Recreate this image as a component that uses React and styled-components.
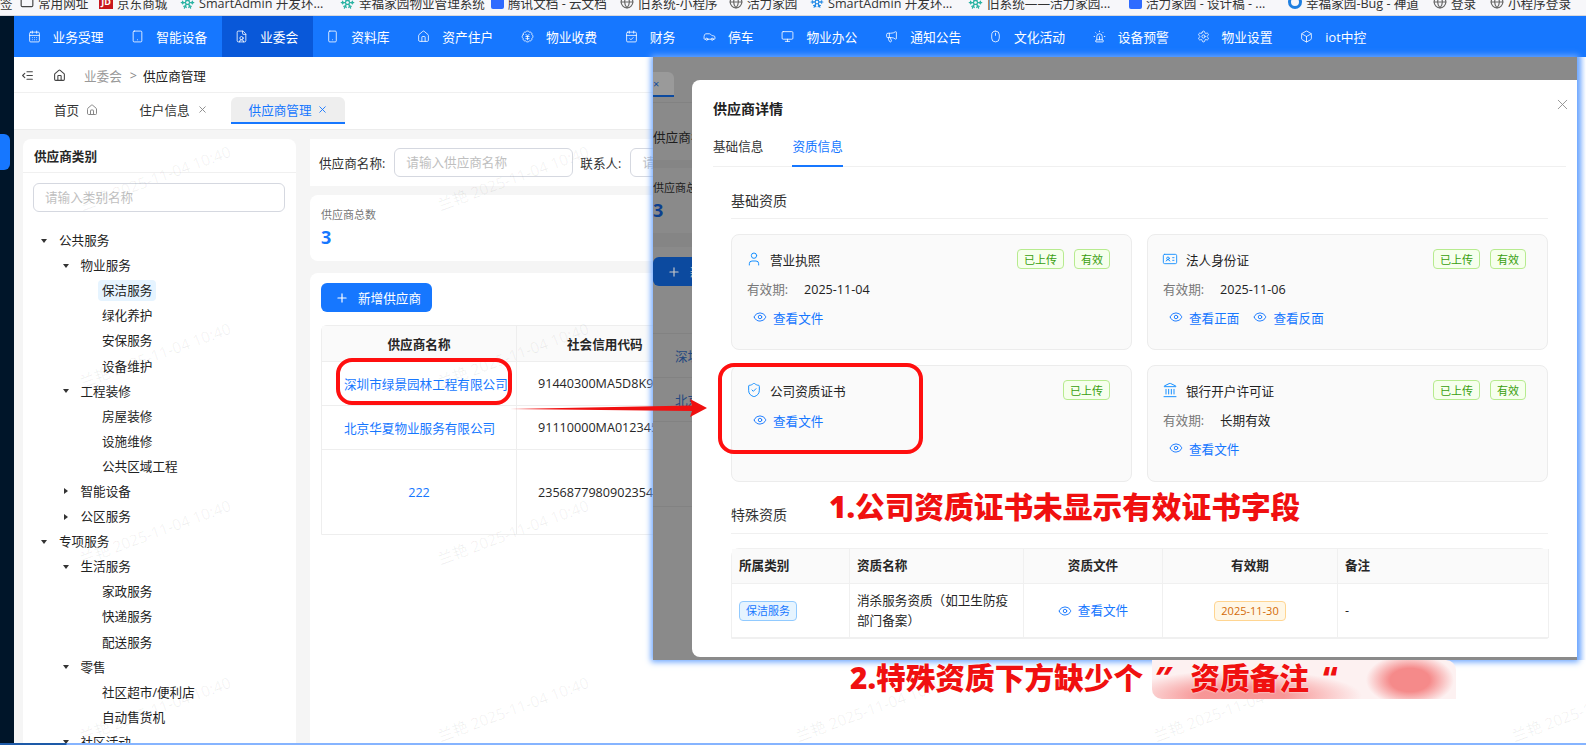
import React from "react";
import styled, { createGlobalStyle } from "styled-components";
import {
  BadgeJapaneseYen,
  Box,
  CalendarCheck,
  CalendarDays,
  Car,
  Eye,
  FileUser,
  Folder,
  Globe,
  House,
  IdCard,
  IndentDecrease,
  Landmark,
  Megaphone,
  Monitor,
  Mouse,
  Plus,
  Settings,
  ShieldCheck,
  Siren,
  Smartphone,
  Snowflake,
  Tablet,
  User,
  X,
} from "lucide-react";

const GlobalStyle = createGlobalStyle`
  html, body {
    margin: 0;
    padding: 0;
    background: #fff;
  }

  * {
    box-sizing: border-box;
  }

  body {
    font-family: "Open Sans", "Noto Sans CJK SC", sans-serif;
    font-size: 12.6px;
    color: #222;
  }
`;

const Page = styled.div`
  position: relative;
  width: 1586px;
  height: 745px;
  overflow: hidden;
  background: #fff;
`;

const BookmarkBar = styled.div`
  display: flex;
  align-items: center;
  height: 16px;
  padding-bottom: 11px;
  background: #f7f7fa;
  border-bottom: 1px solid #d9d9dd;
  color: #333;
  white-space: nowrap;
`;

const BookmarkCut = styled.div`
  width: 20px;
  flex: none;
  overflow: hidden;
`;

const Bookmark = styled.div`
  display: flex;
  align-items: center;
  gap: 4px;
  flex: none;
  width: ${(p) => p.$w}px;
`;

const JdIcon = styled.span`
  width: 14px;
  height: 14px;
  background: #c8161d;
  color: #fff;
  font-size: 9px;
  font-weight: 700;
  text-align: center;
  line-height: 14px;
`;

const DocIcon = styled.span`
  width: 13px;
  height: 13px;
  border-radius: 2px;
  background: #2f6bff;
`;

const BugIcon = styled.span`
  width: 14px;
  height: 14px;
  border-radius: 50%;
  border: 3px solid #1f7fe0;
`;

const Shell = styled.div`
  display: flex;
  height: 729px;
`;

const Rail = styled.div`
  flex: none;
  width: 14px;
  padding-top: 118px;
  background: #001529;
`;

const RailTab = styled.div`
  width: 10px;
  height: 36px;
  background: #1677ff;
  border-radius: 0 6px 6px 0;
`;

const Main = styled.div`
  flex: 1;
  min-width: 0;
  display: flex;
  flex-direction: column;
`;

const TopNav = styled.nav`
  display: flex;
  flex: none;
  height: 41px;
  background: #1677ff;
`;

const NavItem = styled.div`
  display: flex;
  align-items: center;
  gap: 12px;
  padding: 0 14.3px 0 13.5px;
  color: #fff;
  font-size: 12.75px;
  white-space: nowrap;
  background: ${(p) => (p.$active ? "#0958d9" : "transparent")};
`;

const Breadcrumb = styled.div`
  display: flex;
  align-items: center;
  flex: none;
  height: 36px;
  padding: 1px 0 0 4px;
  background: #fff;
  border-bottom: 1px solid #f0f0f0;
  color: #222;
`;

const CrumbIcons = styled.div`
  display: flex;
  align-items: center;
  gap: 19px;
  margin: 0 18px 0 3px;
  color: #444;
`;

const CrumbMuted = styled.span`
  color: #999;
`;

const CrumbSep = styled.span`
  margin: 0 6px 0 8px;
  color: #888;
`;

const TabStrip = styled.div`
  display: flex;
  align-items: flex-end;
  flex: none;
  height: 37px;
  padding: 0 0 5px 40px;
  background: #fff;
  border-bottom: 1px solid #ececec;
`;

const PageTab = styled.div`
  display: flex;
  align-items: center;
  gap: ${(p) => (p.$active ? 5 : 7)}px;
  height: 27px;
  margin-right: ${(p) => (p.$active ? 0 : 41)}px;
  padding: ${(p) => (p.$active ? "0 17px 0 18px" : "0")};
  margin-left: ${(p) => (p.$active ? -18 : 0)}px;
  color: ${(p) => (p.$active ? "#1677ff" : "#333")};
  background: ${(p) => (p.$active ? "#eeeeee" : "transparent")};
  border-radius: 6px 6px 0 0;
  border-bottom: 2px solid ${(p) => (p.$active ? "#1677ff" : "transparent")};

  svg {
    color: ${(p) => (p.$active ? "#1677ff" : "#888")};
  }
`;

const Content = styled.div`
  flex: 1;
  min-height: 0;
  display: flex;
  gap: 14px;
  padding: 9px 0 0 9px;
  background: #f5f5f5;
  overflow: hidden;
`;

const Sidebar = styled.aside`
  flex: none;
  width: 273px;
  background: #fff;
  border-radius: 8px 8px 0 0;
`;

const SidebarTitle = styled.div`
  display: flex;
  align-items: center;
  height: 34px;
  padding-left: 11px;
  border-bottom: 1px solid #f0f0f0;
  font-weight: 700;
  color: #262626;
`;

const SearchBox = styled.input`
  display: block;
  height: 29px;
  padding: 0 11px;
  border: 1px solid #d5d8e0;
  border-radius: 6px;
  outline: none;
  background: #fff;
  font: inherit;
  width: ${(p) => p.$w}px;

  &::placeholder {
    color: #bfbfbf;
  }
`;

const SidebarSearch = styled.div`
  padding: 10px 0 16px 10px;
`;

const TreeRow = styled.div`
  display: flex;
  align-items: center;
  height: 25.1px;
  padding-left: ${(p) => 17 + p.$level * 21.5}px;
  white-space: nowrap;
`;

const Caret = styled.span`
  flex: none;
  width: 8px;
  height: 8px;
  margin-right: 7px;
  display: flex;
  align-items: center;
  justify-content: center;

  &::before {
    content: "";
    visibility: ${(p) => (p.$state === "leaf" ? "hidden" : "visible")};
    border-style: solid;
    border-color: transparent;
    border-width: ${(p) => (p.$state === "open" ? "4px 3.5px 0" : "3.5px 0 3.5px 4px")};
    border-top-color: ${(p) => (p.$state === "open" ? "#333" : "transparent")};
    border-left-color: ${(p) => (p.$state === "closed" ? "#333" : "transparent")};
  }
`;

const TreeLabel = styled.span`
  padding: 0 4px;
  height: 21px;
  line-height: 21px;
  border-radius: 4px;
  background: ${(p) => (p.$selected ? "#e6f4ff" : "transparent")};
`;

const Workspace = styled.div`
  flex: 1;
  min-width: 0;
  display: flex;
  flex-direction: column;
`;

const FilterCard = styled.div`
  display: flex;
  align-items: center;
  flex: none;
  height: 47px;
  padding-left: 9px;
  background: #fff;
`;

const FilterLabel = styled.span`
  margin-right: 9px;
  white-space: nowrap;
  color: #333;
`;

const FilterGap = styled.span`
  width: 7px;
  flex: none;
`;

const StatCard = styled.div`
  flex: none;
  height: 66px;
  margin-top: 9px;
  padding: 12px 11px;
  background: #fff;
  border-radius: 8px;
`;

const StatLabel = styled.div`
  font-size: 11px;
  line-height: 16px;
  color: #777;
`;

const StatValue = styled.div`
  margin-top: 2px;
  font-size: 18px;
  font-weight: 700;
  line-height: 24px;
  color: #1677ff;
`;

const TableCard = styled.div`
  flex: 1;
  margin-top: 12px;
  padding: 10px 11px;
  background: #fff;
  border-radius: 8px 8px 0 0;
`;

const PrimaryButton = styled.button`
  display: flex;
  align-items: center;
  gap: 9px;
  width: 111px;
  height: 29px;
  padding: 0 0 0 14px;
  border: 0;
  border-radius: 6px;
  background: #1677ff;
  color: #fff;
  font: inherit;
`;

const SupplierTable = styled.div`
  display: grid;
  grid-template-columns: 195px 1fr;
  grid-template-rows: 36px 44px 44px 84px;
  margin-top: 13px;
  border: 1px solid #eee;
  border-radius: 6px 6px 0 0;
`;

const SupplierCell = styled.div`
  display: flex;
  align-items: center;
  white-space: nowrap;
  border-right: 1px solid #eee;
  border-bottom: 1px solid #eee;
  background: ${(p) => (p.$head ? "#fafafa" : "#fff")};
  font-weight: ${(p) => (p.$head ? 700 : 400)};
  justify-content: safe center;
  padding: 0 22px;
  color: ${(p) => (p.$link ? "#1677ff" : "#262626")};

  &:nth-last-child(-n + 2) {
    border-bottom: 0;
  }
`;

const CodeCell = styled(SupplierCell)`
  justify-content: flex-start;
  padding: 0 0 0 ${(p) => (p.$head ? 50 : 21)}px;
  overflow: hidden;
`;

const Watermarks = styled.div`
  position: absolute;
  left: -24px;
  top: 89px;
  display: grid;
  grid-template-columns: repeat(5, 358px);
  grid-auto-rows: 177px;
  pointer-events: none;
`;

const Watermark = styled.div`
  display: flex;
  align-items: center;
  justify-content: center;
  white-space: nowrap;
  font-size: 15.5px;
  color: rgba(0, 0, 0, 0.06);
  transform: rotate(-20deg);
`;

const DetailWindow = styled.section`
  position: absolute;
  left: 653px;
  top: 57px;
  width: 924px;
  height: 603px;
  display: flex;
  align-items: stretch;
  background: #8a8a8a;
  box-shadow: 0 0 6px 2px #6aa5ff;
`;

const DimStrip = styled.div`
  flex: none;
  width: 39px;
  display: flex;
  flex-direction: column;
  overflow: hidden;
  white-space: nowrap;
  color: #1d1d1d;
`;

const DimTabs = styled.div`
  flex: none;
  height: 46px;
  padding-top: 15px;
  border-bottom: 1px solid #828282;
`;

const DimTab = styled.div`
  display: flex;
  align-items: center;
  width: 21px;
  height: 25px;
  background: #9a9a9a;
  border-bottom: 2px solid #0c4a9f;
  border-radius: 0 6px 0 0;
  color: #0c4a9f;
  font-size: 11px;
`;

const DimFilter = styled.div`
  flex: none;
  height: 57px;
  padding-top: 24px;
`;

const DimBand = styled.div`
  flex: none;
  height: ${(p) => p.$h}px;
  background: #858585;
`;

const DimStat = styled.div`
  flex: none;
  height: 65px;
  padding-top: 11px;
  font-size: 11px;
  line-height: 18px;
`;

const DimValue = styled.div`
  margin-top: 1px;
  font-size: 18px;
  font-weight: 700;
  line-height: 24px;
  color: #0c3f8f;
`;

const DimButton = styled.div`
  display: flex;
  align-items: center;
  gap: 9px;
  flex: none;
  height: 29px;
  margin-top: 10px;
  padding-left: 14px;
  border-radius: 6px 0 0 6px;
  background: #0c4a9f;
  color: #c9c9c9;

  svg {
    flex: none;
  }
`;

const DimRow = styled.div`
  display: flex;
  align-items: center;
  flex: none;
  height: ${(p) => p.$h}px;
  padding-left: 22px;
  border-bottom: 1px solid #828282;
  color: #24487f;
`;

const Dialog = styled.div`
  flex: 1;
  min-width: 0;
  display: flex;
  flex-direction: column;
  margin: 23px 0 3px;
  padding: 20px 11px 0 21px;
  background: #fff;
  border-radius: 8px 0 0 8px;
  position: relative;
`;

const DialogTitle = styled.div`
  font-size: 14px;
  font-weight: 700;
  line-height: 18px;
  color: #222;
`;

const CloseButton = styled.span`
  position: absolute;
  top: 16px;
  right: 6px;
  display: flex;
  color: #888;
`;

const DialogTabs = styled.div`
  display: flex;
  gap: 29px;
  height: 29px;
  margin-top: 20px;
  border-bottom: 1px solid #f0f0f0;
`;

const DialogTab = styled.div`
  height: 29px;
  line-height: 18px;
  color: ${(p) => (p.$active ? "#1677ff" : "#333")};
  border-bottom: 2px solid ${(p) => (p.$active ? "#1677ff" : "transparent")};
`;

const DialogBody = styled.div`
  padding: 24px 18px 0;
`;

const SectionTitle = styled.div`
  height: ${(p) => p.$h}px;
  font-size: 14px;
  line-height: 20px;
  border-bottom: 1px solid #f0f0f0;
  color: #333;
`;

const CardGrid = styled.div`
  display: grid;
  grid-template-columns: 401px 401px;
  grid-template-rows: 116px 117px;
  gap: 15px;
  margin: 15px 0 23px;
`;

const Card = styled.div`
  padding: 14px 21px 0 14px;
  background: #fafafa;
  border: 1px solid #ececec;
  border-radius: 8px;
`;

const CardHead = styled.div`
  display: flex;
  align-items: center;
  gap: 6px;
  height: 20px;

  svg {
    color: #1890ff;
    flex: none;
  }
`;

const CardName = styled.span`
  flex: 1;
  margin-left: 2px;
  color: #222;
`;

const Tag = styled.span`
  display: flex;
  align-items: center;
  height: 20px;
  padding: 0 6px;
  margin-left: ${(p) => p.$gap || 0}px;
  border: 1px solid ${(p) => p.$border};
  border-radius: 4px;
  background: ${(p) => p.$bg};
  color: ${(p) => p.$color};
  font-size: 11px;
  white-space: nowrap;
`;

const GreenTag = ({ children }) => (
  <Tag $gap={4} $border="#b7eb8f" $bg="#f6ffed" $color="#389e0d">
    {children}
  </Tag>
);

const InfoRow = styled.div`
  display: flex;
  height: 20px;
  margin-top: 11px;
  padding-left: 1px;
  line-height: 20px;
`;

const InfoLabel = styled.span`
  width: 57px;
  color: #777;
`;

const LinkRow = styled.div`
  display: flex;
  gap: 14px;
  margin-top: ${(p) => (p.$first ? 10 : 7)}px;
  padding-left: 7px;
`;

const FileLink = styled.span`
  display: flex;
  align-items: center;
  gap: 6px;
  height: 20px;
  color: #1677ff;
  white-space: nowrap;
`;

const QualTable = styled.div`
  display: grid;
  grid-template-columns: 118px 174px 139px 175px 211px;
  grid-template-rows: 35px 54px;
  margin-top: 14px;
  border: 1px solid #f0f0f0;
  border-radius: 8px 8px 0 0;
`;

const QualCell = styled.div`
  display: flex;
  align-items: center;
  justify-content: ${(p) => (p.$center ? "center" : "flex-start")};
  padding: 0 7px;
  line-height: 20px;
  background: ${(p) => (p.$head ? "#fafafa" : "#fff")};
  font-weight: ${(p) => (p.$head ? 700 : 400)};
  border-right: 1px solid #f0f0f0;
  border-bottom: 1px solid #f0f0f0;
  color: #262626;
`;

const Callout = styled.div`
  position: absolute;
  border: 4.5px solid #ff0f0f;
  border-radius: 16px;
  left: ${(p) => p.$x}px;
  top: ${(p) => p.$y}px;
  width: ${(p) => p.$w}px;
  height: ${(p) => p.$h}px;
`;

const Arrow = styled.svg`
  position: absolute;
  left: 510px;
  top: 395px;
`;

const RedNote = styled.div`
  position: absolute;
  left: ${(p) => p.$x}px;
  top: ${(p) => p.$y}px;
  font-size: 29.7px;
  font-weight: 900;
  line-height: 36px;
  color: #f01010;
  white-space: nowrap;
  text-shadow: 0 0 2px #fff;
`;

const QuoteMark = styled.span`
  margin: 0 ${(p) => p.$right}px 0 ${(p) => p.$left}px;
`;

const BlurPatch = styled.div`
  position: absolute;
  left: 1152px;
  top: 660px;
  width: 304px;
  height: 39px;
  border-radius: 0 10px 0 10px;
  background:
    radial-gradient(ellipse 44px 26px at 258px 20px, #f58a8a 45%, rgba(245, 138, 138, 0) 100%),
    radial-gradient(ellipse 120px 26px at 90px 36px, rgba(245, 120, 120, 0.75) 35%, rgba(245, 120, 120, 0) 100%),
    #fdf1f1;
`;

const RightEdge = styled.div`
  position: absolute;
  right: 0;
  top: 57px;
  width: 9px;
  height: 603px;
  background: linear-gradient(90deg, #8fbcff, #dbe9ff 60%, #fff);
`;

const BottomEdge = styled.div`
  position: absolute;
  left: 0;
  right: 0;
  bottom: 0;
  height: 2px;
  background: linear-gradient(90deg, #1d5aa8 0, #1d5aa8 66px, #86b4ff 67px);
`;

const bookmarks = [
  { w: 79, icon: <Folder size={14} color="#444" />, text: "常用网址" },
  { w: 81, icon: <JdIcon>JD</JdIcon>, text: "京东商城" },
  { w: 160, icon: <Snowflake size={15} color="#2bb3a3" />, text: "SmartAdmin 开发环..." },
  { w: 151, icon: <Snowflake size={15} color="#2bb3a3" />, text: "幸福家园物业管理系统" },
  { w: 129, icon: <DocIcon />, text: "腾讯文档 - 云文档" },
  { w: 109, icon: <Globe size={14} color="#666" />, text: "旧系统-小程序" },
  { w: 81, icon: <Globe size={14} color="#666" />, text: "活力家园" },
  { w: 158, icon: <Snowflake size={14} color="#1e88e5" />, text: "SmartAdmin 开发环..." },
  { w: 161, icon: <Snowflake size={15} color="#2bb3a3" />, text: "旧系统——活力家园..." },
  { w: 159, icon: <DocIcon />, text: "活力家园 - 设计稿 - ..." },
  { w: 145, icon: <BugIcon />, text: "幸福家园-Bug - 禅道" },
  { w: 57, icon: <Globe size={14} color="#666" />, text: "登录" },
  { w: 90, icon: <Globe size={14} color="#666" />, text: "小程序登录" },
];

const navItems = [
  { Icon: CalendarDays, text: "业务受理" },
  { Icon: Tablet, text: "智能设备" },
  { Icon: FileUser, text: "业委会", active: true },
  { Icon: Smartphone, text: "资料库" },
  { Icon: House, text: "资产住户" },
  { Icon: BadgeJapaneseYen, text: "物业收费" },
  { Icon: CalendarCheck, text: "财务" },
  { Icon: Car, text: "停车" },
  { Icon: Monitor, text: "物业办公" },
  { Icon: Megaphone, text: "通知公告" },
  { Icon: Mouse, text: "文化活动" },
  { Icon: Siren, text: "设备预警" },
  { Icon: Settings, text: "物业设置" },
  { Icon: Box, text: "iot中控" },
];

const tree = [
  ["公共服务", 0, "open"],
  ["物业服务", 1, "open"],
  ["保洁服务", 2, "leaf", true],
  ["绿化养护", 2, "leaf"],
  ["安保服务", 2, "leaf"],
  ["设备维护", 2, "leaf"],
  ["工程装修", 1, "open"],
  ["房屋装修", 2, "leaf"],
  ["设施维修", 2, "leaf"],
  ["公共区域工程", 2, "leaf"],
  ["智能设备", 1, "closed"],
  ["公区服务", 1, "closed"],
  ["专项服务", 0, "open"],
  ["生活服务", 1, "open"],
  ["家政服务", 2, "leaf"],
  ["快递服务", 2, "leaf"],
  ["配送服务", 2, "leaf"],
  ["零售", 1, "open"],
  ["社区超市/便利店", 2, "leaf"],
  ["自动售货机", 2, "leaf"],
  ["社区活动", 1, "open"],
];

const suppliers = [
  ["深圳市绿景园林工程有限公司", "91440300MA5D8K9X2Y"],
  ["北京华夏物业服务有限公司", "91110000MA01234567"],
  ["222", "235687798090235454"],
];

const watermarkCells = Array.from({ length: 20 }, (_, i) => i);

function ViewLink({ children }) {
  return (
    <FileLink>
      <Eye size={14} strokeWidth={1.6} />
      {children}
    </FileLink>
  );
}

function BaseApp() {
  return (
    <Shell>
      <Rail>
        <RailTab />
      </Rail>
      <Main>
        <TopNav>
          {navItems.map(({ Icon, text, active }) => (
            <NavItem key={text} $active={active}>
              <Icon size={13} strokeWidth={1.5} />
              {text}
            </NavItem>
          ))}
        </TopNav>
        <Breadcrumb>
          <CrumbIcons>
            <IndentDecrease size={13} />
            <House size={13} />
          </CrumbIcons>
          <CrumbMuted>业委会</CrumbMuted>
          <CrumbSep>&gt;</CrumbSep>
          供应商管理
        </Breadcrumb>
        <TabStrip>
          <PageTab>
            首页 <House size={12} />
          </PageTab>
          <PageTab>
            住户信息 <X size={11} />
          </PageTab>
          <PageTab $active>
            供应商管理 <X size={11} />
          </PageTab>
        </TabStrip>
        <Content>
          <Sidebar>
            <SidebarTitle>供应商类别</SidebarTitle>
            <SidebarSearch>
              <SearchBox $w={252} placeholder="请输入类别名称" readOnly />
            </SidebarSearch>
            {tree.map(([label, level, state, selected]) => (
              <TreeRow key={label + level} $level={level}>
                <Caret $state={state} />
                <TreeLabel $selected={selected}>{label}</TreeLabel>
              </TreeRow>
            ))}
          </Sidebar>
          <Workspace>
            <FilterCard>
              <FilterLabel>供应商名称:</FilterLabel>
              <SearchBox $w={179} placeholder="请输入供应商名称" readOnly />
              <FilterGap />
              <FilterLabel>联系人:</FilterLabel>
              <SearchBox $w={179} placeholder="请输入联系人" readOnly />
            </FilterCard>
            <StatCard>
              <StatLabel>供应商总数</StatLabel>
              <StatValue>3</StatValue>
            </StatCard>
            <TableCard>
              <PrimaryButton>
                <Plus size={14} />
                新增供应商
              </PrimaryButton>
              <SupplierTable>
                <SupplierCell $head>供应商名称</SupplierCell>
                <CodeCell $head>社会信用代码</CodeCell>
                {suppliers.map(([name, code]) => (
                  <React.Fragment key={name}>
                    <SupplierCell $link>{name}</SupplierCell>
                    <CodeCell>{code}</CodeCell>
                  </React.Fragment>
                ))}
              </SupplierTable>
            </TableCard>
          </Workspace>
        </Content>
      </Main>
    </Shell>
  );
}

function DetailDialog() {
  return (
    <Dialog>
      <DialogTitle>供应商详情</DialogTitle>
      <CloseButton>
        <X size={17} strokeWidth={1.2} />
      </CloseButton>
      <DialogTabs>
        <DialogTab>基础信息</DialogTab>
        <DialogTab $active>资质信息</DialogTab>
      </DialogTabs>
      <DialogBody>
        <SectionTitle $h={28}>基础资质</SectionTitle>
        <CardGrid>
          <Card>
            <CardHead>
              <User size={16} strokeWidth={1.5} />
              <CardName>营业执照</CardName>
              <GreenTag>已上传</GreenTag>
              <GreenTag>有效</GreenTag>
            </CardHead>
            <InfoRow>
              <InfoLabel>有效期:</InfoLabel>2025-11-04
            </InfoRow>
            <LinkRow>
              <ViewLink>查看文件</ViewLink>
            </LinkRow>
          </Card>
          <Card>
            <CardHead>
              <IdCard size={16} strokeWidth={1.4} />
              <CardName>法人身份证</CardName>
              <GreenTag>已上传</GreenTag>
              <GreenTag>有效</GreenTag>
            </CardHead>
            <InfoRow>
              <InfoLabel>有效期:</InfoLabel>2025-11-06
            </InfoRow>
            <LinkRow>
              <ViewLink>查看正面</ViewLink>
              <ViewLink>查看反面</ViewLink>
            </LinkRow>
          </Card>
          <Card>
            <CardHead>
              <ShieldCheck size={16} strokeWidth={1.5} />
              <CardName>公司资质证书</CardName>
              <GreenTag>已上传</GreenTag>
            </CardHead>
            <LinkRow $first>
              <ViewLink>查看文件</ViewLink>
            </LinkRow>
          </Card>
          <Card>
            <CardHead>
              <Landmark size={16} strokeWidth={1.5} />
              <CardName>银行开户许可证</CardName>
              <GreenTag>已上传</GreenTag>
              <GreenTag>有效</GreenTag>
            </CardHead>
            <InfoRow>
              <InfoLabel>有效期:</InfoLabel>长期有效
            </InfoRow>
            <LinkRow>
              <ViewLink>查看文件</ViewLink>
            </LinkRow>
          </Card>
        </CardGrid>
        <SectionTitle $h={29}>特殊资质</SectionTitle>
        <QualTable>
          <QualCell $head>所属类别</QualCell>
          <QualCell $head>资质名称</QualCell>
          <QualCell $head $center>资质文件</QualCell>
          <QualCell $head $center>有效期</QualCell>
          <QualCell $head>备注</QualCell>
          <QualCell>
            <Tag $border="#91caff" $bg="#e6f4ff" $color="#1677ff">保洁服务</Tag>
          </QualCell>
          <QualCell>消杀服务资质（如卫生防疫部门备案）</QualCell>
          <QualCell $center>
            <ViewLink>查看文件</ViewLink>
          </QualCell>
          <QualCell $center>
            <Tag $border="#ffd591" $bg="#fff7e6" $color="#d46b08">2025-11-30</Tag>
          </QualCell>
          <QualCell>-</QualCell>
        </QualTable>
      </DialogBody>
    </Dialog>
  );
}

export default function App() {
  return (
    <Page>
      <GlobalStyle />
      <BookmarkBar>
        <BookmarkCut>签</BookmarkCut>
        {bookmarks.map((b, i) => (
          <Bookmark key={i} $w={b.w}>
            {b.icon}
            {b.text}
          </Bookmark>
        ))}
      </BookmarkBar>
      <BaseApp />
      <Watermarks>
        {watermarkCells.map((i) => (
          <Watermark key={i}>兰艳 2025-11-04 10:40</Watermark>
        ))}
      </Watermarks>
      <RightEdge />
      <DetailWindow>
        <DimStrip>
          <DimTabs>
            <DimTab>×</DimTab>
          </DimTabs>
          <DimFilter>供应商名称</DimFilter>
          <DimBand $h={8} />
          <DimStat>
            供应商总数
            <DimValue>3</DimValue>
          </DimStat>
          <DimBand $h={14} />
          <DimButton>
            <Plus size={14} />
            新增
          </DimButton>
          <DimRow $h={48} />
          <DimRow $h={44}>深圳市</DimRow>
          <DimRow $h={44}>北京华</DimRow>
          <DimRow $h={85} />
        </DimStrip>
        <DetailDialog />
      </DetailWindow>
      <BottomEdge />
      <Callout $x={336} $y={358} $w={176} $h={47} />
      <Callout $x={718} $y={363} $w={205} $h={91} />
      <Arrow width="198" height="26" viewBox="0 0 198 26">
        <polygon points="0,14 182,10.5 180,4 197,13 180,22 182,16" fill="#f01010" />
      </Arrow>
      <BlurPatch />
      <RedNote $x={829} $y={489}>1.公司资质证书未显示有效证书字段</RedNote>
      <RedNote $x={850} $y={660}>
        2.特殊资质下方缺少个
        <QuoteMark $left={12} $right={18}>″</QuoteMark>
        资质备注
        <QuoteMark $left={14} $right={0}>“</QuoteMark>
      </RedNote>
    </Page>
  );
}
